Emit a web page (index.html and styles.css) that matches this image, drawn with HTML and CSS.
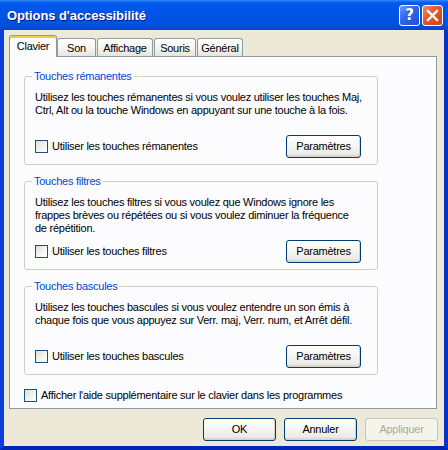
FILE: index.html
```html
<!DOCTYPE html>
<html lang="fr">
<head>
<meta charset="utf-8">
<title>Options d'accessibilité</title>
<link rel="stylesheet" href="styles.css">
</head>
<body>
<div class="window">
  <div class="titlebar">
    <span class="title">Options d'accessibilité</span>
    <div class="title-buttons">
      <span class="tbtn help">?</span>
      <span class="tbtn close"><svg width="13" height="13" viewBox="0 0 13 13"><path d="M2 2 L11 11 M11 2 L2 11" stroke="#fff" stroke-width="2.4" stroke-linecap="square"/></svg></span>
    </div>
  </div>
  <div class="client">
    <div class="tabs">
      <div class="tab active w-clavier">Clavier</div>
      <div class="tab w-son">Son</div>
      <div class="tab w-affichage">Affichage</div>
      <div class="tab w-souris">Souris</div>
      <div class="tab w-general">Général</div>
    </div>
    <div class="panel">
      <fieldset class="group">
        <legend>Touches rémanentes</legend>
        <p class="desc">Utilisez les touches rémanentes si vous voulez utiliser les touches Maj,<br>Ctrl, Alt ou la touche Windows en appuyant sur une touche à la fois.</p>
        <div class="row">
          <label class="check"><span class="box"></span>Utiliser les touches rémanentes</label>
          <span class="btn">Paramètres</span>
        </div>
      </fieldset>
      <fieldset class="group">
        <legend>Touches filtres</legend>
        <p class="desc">Utilisez les touches filtres si vous voulez que Windows ignore les<br>frappes brèves ou répétées ou si vous voulez diminuer la fréquence<br>de répétition.</p>
        <div class="row">
          <label class="check"><span class="box"></span>Utiliser les touches filtres</label>
          <span class="btn">Paramètres</span>
        </div>
      </fieldset>
      <fieldset class="group">
        <legend>Touches bascules</legend>
        <p class="desc">Utilisez les touches bascules si vous voulez entendre un son émis à<br>chaque fois que vous appuyez sur Verr. maj, Verr. num, et Arrêt défil.</p>
        <div class="row">
          <label class="check"><span class="box"></span>Utiliser les touches bascules</label>
          <span class="btn">Paramètres</span>
        </div>
      </fieldset>
      <label class="check extra"><span class="box"></span>Afficher l'aide supplémentaire sur le clavier dans les programmes</label>
    </div>
    <div class="actions">
      <span class="btn action">OK</span>
      <span class="btn action">Annuler</span>
      <span class="btn action disabled">Appliquer</span>
    </div>
  </div>
</div>
</body>
</html>
```

FILE: styles.css
```css
* { box-sizing: border-box; }
html, body {
  margin: 0;
  padding: 0;
  width: 448px;
  height: 450px;
  overflow: hidden;
  background: #ECE9D8;
}
body {
  font-family: "Liberation Sans", Arial, sans-serif;
  font-size: 11px;
  line-height: 13px;
  color: #000;
  letter-spacing: -0.25px;
}
.window {
  width: 448px;
  height: 450px;
  background: #ECE9D8;
  border-left: 4px solid #0840D8;
  border-right: 4px solid #0831C6;
  border-bottom: 4px solid #0025B8;
  display: flex;
  flex-direction: column;
}
.titlebar {
  height: 30px;
  margin: 0 -4px;
  flex: none;
  display: flex;
  align-items: center;
  justify-content: space-between;
  padding: 0 5px 0 7px;
  background: linear-gradient(#3C8CF8 0px, #0A62F0 2px, #0058EE 4px, #0055E6 40%, #0052E0 80%, #0047CF 100%);
}
.title {
  color: #fff;
  font-weight: bold;
  font-size: 13px;
  letter-spacing: -0.1px;
  text-shadow: 1px 1px 0 #0A1883;
  padding-top: 1px;
}
.title-buttons {
  display: flex;
  gap: 2px;
  padding-top: 1px;
}
.tbtn {
  width: 21px;
  height: 21px;
  border: 1px solid #fff;
  border-radius: 3px;
  display: flex;
  align-items: center;
  justify-content: center;
  color: #fff;
}
.help {
  background: linear-gradient(135deg, #6B9CFA 0%, #2E62E8 45%, #1E4FD8 100%);
  font-family: "DejaVu Sans", sans-serif;
  font-weight: bold;
  font-size: 15px;
  letter-spacing: 0;
}
.close {
  background: linear-gradient(135deg, #F08A62 0%, #E2562E 45%, #CC4518 100%);
}
.client {
  flex: 1;
  display: flex;
  flex-direction: column;
  padding: 5px 0 0 5px;
}
.tabs {
  display: flex;
  align-items: flex-end;
  height: 21px;
  gap: 1px;
}
.tab {
  height: 18px;
  border: 1px solid #919B9C;
  border-bottom: none;
  border-radius: 3px 3px 0 0;
  background: linear-gradient(#FFFFFF, #F3F3EF 60%, #E6E5DD);
  text-align: center;
  padding-top: 3px;
}
.tab.active {
  height: 22px;
  margin-bottom: -1px;
  margin-right: -1px;
  position: relative;
  z-index: 1;
  background: #FCFCFE;
  border-top: 1px solid #E68B2C;
  box-shadow: inset 0 2px 0 #FFC83C;
  padding-top: 4px;
}
.w-clavier { width: 48px; }
.w-son { width: 39px; }
.w-affichage { width: 56px; }
.w-souris { width: 42px; }
.w-general { width: 46px; }
.panel {
  width: 428px;
  height: 353px;
  flex: none;
  background: #FCFCFE;
  border: 1px solid #919B9C;
  padding: 13px 0 6px 14px;
  display: flex;
  flex-direction: column;
}
.group {
  width: 354px;
  margin: 0 0 10px 0;
  padding: 8px 16px 6px 10px;
  border: 1px solid #D0D0BF;
  border-radius: 3px;
  min-width: 0;
}
.group legend {
  color: #0046D5;
  padding: 0 2px;
  margin-left: -3px;
  line-height: 13px;
}
.desc {
  margin: 0;
  height: 39px;
  white-space: nowrap;
}
.row {
  margin-top: 5px;
  display: flex;
  align-items: center;
  justify-content: space-between;
  height: 23px;
}
.check {
  display: flex;
  align-items: center;
  gap: 3px;
  height: 13px;
}
.box {
  width: 13px;
  height: 13px;
  flex: none;
  border: 1px solid #1C5180;
  background: linear-gradient(135deg, #DCDCD7 0%, #F2F2EE 50%, #FFFFFF 100%);
  margin-right: 1px;
}
.extra {
  margin-top: 4px;
}
.btn {
  width: 75px;
  height: 23px;
  border: 1px solid #003C74;
  border-radius: 3px;
  background: linear-gradient(#FFFFFF 0%, #F4F4F0 50%, #ECEBE6 85%, #D6D0C5 100%);
  display: flex;
  align-items: center;
  justify-content: center;
  box-shadow: inset -1px -1px 0 #D8D2C6;
}
.actions {
  margin-top: 9px;
  display: flex;
  justify-content: flex-end;
  gap: 8px;
  padding-right: 6px;
}
.btn.action {
  width: 73px;
}
.btn.disabled {
  border-color: #C9C7BA;
  background: #F5F4EA;
  color: #ACA899;
  box-shadow: none;
}
```
